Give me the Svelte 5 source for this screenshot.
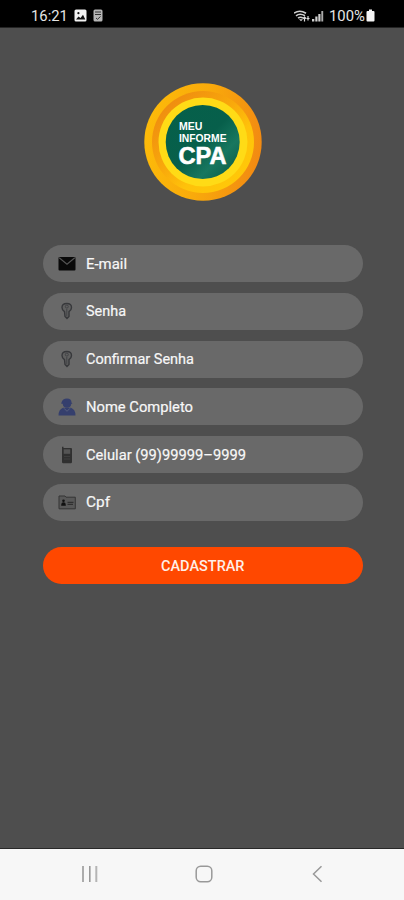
<script lang="ts">
	const fields = [
		{ icon: 'mail', label: 'E-mail', width: 41 },
		{ icon: 'key', label: 'Senha', width: 40 },
		{ icon: 'key', label: 'Confirmar Senha', width: 108 },
		{ icon: 'user', label: 'Nome Completo', width: 107 },
		{ icon: 'phone', label: 'Celular (99)99999–9999', width: 160 },
		{ icon: 'card', label: 'Cpf', width: 24 }
	];
</script>

<div class="screen">
	<header class="status">
		<div class="status--left">
			<span class="clock">16:21</span>
			<svg width="13" height="13" viewBox="0 0 13 13">
				<rect x="0.5" y="0.5" width="12" height="12" rx="1.5" fill="#f2f2f2" />
				<path d="M2 10.5l2.5-3 2 1.5 2.5-3.2 2.3 4.7z" fill="#111" />
				<circle cx="4.4" cy="4.2" r="1.1" fill="#111" />
			</svg>
			<svg width="10" height="13" viewBox="0 0 10 13">
				<rect x="0.5" y="0.5" width="9" height="12" rx="1.5" fill="#b5b5b5" />
				<path d="M2 3h6M2 5.5h6" stroke="#333" stroke-width="1" />
				<path d="M3 9l1.5 1.3L7.5 7.5" stroke="#333" fill="none" />
			</svg>
		</div>
		<div class="status--right">
			<svg width="31" height="14" viewBox="0 0 31 14">
				<g fill="none" stroke="#d0d0d0" stroke-width="1.6">
					<path d="M0 4.2q5.500-4 12 0" />
					<path d="M2 6.800q4-3 9 0" />
					<path d="M4 9.200q2.500-2 5 0" />
				</g>
				<path d="M5 10.200h4l-2 2z" fill="#d0d0d0" />
				<path d="M10.500 12.500V8M9 9.500L10.500 8 12 9.500M14 7v4.500M12.500 9.500h3" fill="none" stroke="#ddd" stroke-width="1.2" />
				<path d="M18 12.500v-2.500h2.300v2.500zM21.300 12.500V7.500h2.200v5zM24.300 12.500V5h2.200v7.500z" fill="#cfcfcf" />
				<path d="M27.300 12.500V2h1.900v10.500z" fill="#aaa" />
			</svg>
			<span class="battery">100%</span>
			<svg width="9" height="13" viewBox="0 0 9 13">
				<path d="M3 0.500h3v1.500h1.500q1 0 1 1v8.500q0 1-1 1h-6q-1 0-1-1V3q0-1 1-1H3z" fill="#f5f5f5" />
			</svg>
		</div>
	</header>

	<main>
		<svg class="logo" width="120" height="120" viewBox="0 0 120 120">
			<defs>
				<linearGradient id="rim" x1="0" y1="0.35" x2="1" y2="0.5">
					<stop offset="0" stop-color="#fdbb09" />
					<stop offset="0.5" stop-color="#f9aa0b" />
					<stop offset="1" stop-color="#f28a12" />
				</linearGradient>
				<linearGradient id="groove" x1="0.1" y1="0.1" x2="0.85" y2="0.9">
					<stop offset="0" stop-color="#ee8a10" />
					<stop offset="0.45" stop-color="#f9a90b" />
					<stop offset="0.7" stop-color="#ffc20a" />
					<stop offset="1" stop-color="#ffc808" />
				</linearGradient>
				<linearGradient id="green" x1="0" y1="0" x2="1" y2="1">
					<stop offset="0" stop-color="#05604a" />
					<stop offset="0.5" stop-color="#075f4b" />
					<stop offset="0.72" stop-color="#18775f" />
					<stop offset="1" stop-color="#075642" />
				</linearGradient>
			</defs>
			<circle cx="60" cy="60" r="58.7" fill="url(#rim)" />
			<circle cx="60" cy="60" r="51" fill="url(#groove)" />
			<circle cx="60" cy="60" r="44.5" fill="#ffdb16" />
			<circle cx="59.7" cy="60" r="37" fill="url(#green)" />
			<g class="logo--text">
				<text x="36" y="47.5" font-size="11.5" textLength="23.5" lengthAdjust="spacingAndGlyphs">MEU</text>
				<text x="36" y="60" font-size="11.7" textLength="47.5" lengthAdjust="spacingAndGlyphs">INFORME</text>
				<text class="cpa" x="35.5" y="82" font-size="23.5" textLength="48" lengthAdjust="spacingAndGlyphs">CPA</text>
			</g>
		</svg>

		<form>
			{#each fields as field}
				<div class="field">
					<svg class="icon" width="18" height="18" viewBox="0 0 18 18">
						{#if field.icon === 'mail'}
							<rect x="0.5" y="2" width="17" height="13.5" rx="1" fill="#090909" />
							<path d="M1.200 2.800l7.800 6.400 7.800-6.400" fill="none" stroke="#555" stroke-width="1.1" />
						{:else if field.icon === 'key'}
							<path
								d="M6.500 9.700Q4 8 4 5.500Q4 1.500 8.800 1.500T13.500 5.500Q13.500 8 11 9.700V14.500L9 16.500 7 14.500z"
								fill="#606060"
								stroke="#37383b"
								stroke-width="1.4"
							/>
							<circle cx="8.8" cy="4.6" r="1.5" fill="none" stroke="#424346" />
							<path d="M8.800 7v7.500" stroke="#424346" />
						{:else if field.icon === 'user'}
							<path d="M3.500 4.500Q4.500 .500 9 .500t4.500 4l1 1.200h-1.200Q13 9.800 9 9.800T4.700 5.700H3.200z" fill="#353f6d" />
							<path d="M0.500 17.500q0-6 4.500-7.800h8q4.500 1.800 4.500 7.800z" fill="#353f6d" />
							<path d="M6 10.300l3 3 3-3" fill="none" stroke="#59617f" stroke-width="0.9" />
						{:else if field.icon === 'phone'}
							<path d="M4 2V.800h1.500V2H13q1 0 1 1v13q0 1.300-1.300 1.300H5.300Q4 17.300 4 16z" fill="#303030" />
							<rect x="5.7" y="3.3" width="6.5" height="4.5" fill="#555" />
							<path d="M6 10.500h6M6 13h6" stroke="#3e3e3e" />
						{:else}
							<path d="M1 3h6l1 1.200h9.300v11.600H1z" fill="#585858" stroke="#353535" />
							<circle cx="5.5" cy="7.7" r="1.3" fill="#111" />
							<path d="M3.200 12.700q0-3.400 2.300-3.400t2.300 3.400z" fill="#111" />
							<path d="M9.500 9.300h6M9.500 11.300h5.500" stroke="#303030" stroke-width="1.2" />
						{/if}
					</svg>
					<svg class="label" width="170" height="20">
						<text x="0" y="15" textLength={field.width} lengthAdjust="spacingAndGlyphs">{field.label}</text>
					</svg>
				</div>
			{/each}
			<button type="button">CADASTRAR</button>
		</form>
	</main>

	<nav>
		<svg width="18" height="18" viewBox="0 0 18 18">
			<path d="M2 1v16M8.800 1v16" stroke="#999" stroke-width="1.6" />
			<path d="M15.300 1v16" stroke="#b5b5b5" stroke-width="2" />
		</svg>
		<svg width="18" height="18" viewBox="0 0 18 18">
			<rect x="1.2" y="1.2" width="15.6" height="15.6" rx="4.5" fill="none" stroke="#999" stroke-width="1.5" />
		</svg>
		<svg width="18" height="18" viewBox="0 0 18 18">
			<path d="M13.500 1.200L5.500 9l8 7.800" fill="none" stroke="#999" stroke-width="1.5" />
		</svg>
	</nav>
</div>

<style>
	:global(body) {
		margin: 0;
		background: #4e4e4e;
	}

	.screen {
		display: flex;
		flex-direction: column;
		height: 900px;
		background: #4e4e4e;
		font-family: Roboto, sans-serif;
		color: #f5f5f5;
	}

	svg {
		display: block;
		flex: none;
	}

	.status {
		display: flex;
		justify-content: space-between;
		height: 28px;
		box-sizing: border-box;
		padding: 4px 29px 0 31px;
		background: #000;
		border-bottom: 1px solid #242424;
	}

	.status--left,
	.status--right {
		display: flex;
		align-items: center;
	}

	.clock {
		width: 43px;
		font-size: 14.8px;
		color: #e5e5e5;
	}

	.status--left svg + svg {
		margin-left: 6px;
	}

	.battery {
		width: 37px;
		margin-left: 4px;
		font-size: 14.8px;
		color: #e5e5e5;
	}

	main {
		flex: 1;
		display: flex;
		flex-direction: column;
		align-items: center;
		padding: 54px 0 0 1.5px;
	}

	.logo--text {
		fill: #fff;
		font-family: 'Liberation Sans', Arial, sans-serif;
		font-weight: 700;
	}

	.cpa {
		stroke: #fff;
		stroke-width: 0.6px;
	}

	form {
		display: flex;
		flex-direction: column;
		gap: 10.8px;
		width: 320.5px;
		margin-top: 43px;
	}

	.field {
		display: flex;
		align-items: center;
		height: 37px;
		box-sizing: border-box;
		padding-left: 15px;
		border-radius: 19px;
		background: #696969;
	}

	.label {
		margin-left: 10.2px;
		font-size: 15px;
		fill: #f7f7f7;
		stroke: #f7f7f7;
		stroke-width: 0.2px;
	}

	button {
		height: 37px;
		margin-top: 15.5px;
		padding: 2px 0 0;
		border: 0;
		border-radius: 19px;
		background: #ff4800;
		color: #ffefe8;
		font-family: inherit;
		font-size: 14.5px;
		font-weight: 500;
	}

	nav {
		display: flex;
		justify-content: center;
		align-items: center;
		gap: 95.5px;
		height: 52px;
		box-sizing: border-box;
		padding: 0 0 1px 3px;
		border-top: 1px solid #282828;
		background: #f7f7f7;
	}
</style>
